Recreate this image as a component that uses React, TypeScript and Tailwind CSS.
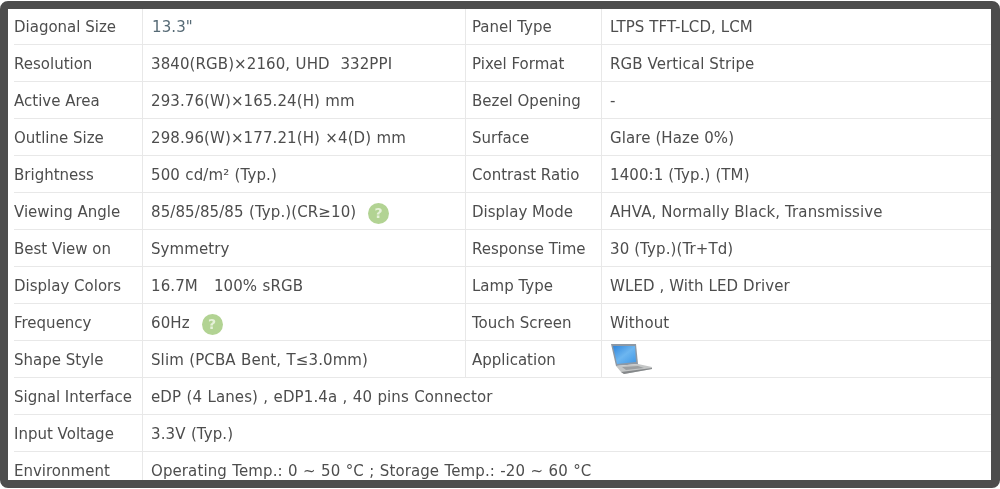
const rows = [
  ['Diagonal Size', '13.3"', 'Panel Type', 'LTPS TFT-LCD, LCM'],
  ['Resolution', '3840(RGB)×2160, UHD  332PPI', 'Pixel Format', 'RGB Vertical Stripe'],
  ['Active Area', '293.76(W)×165.24(H) mm', 'Bezel Opening', '-'],
  ['Outline Size', '298.96(W)×177.21(H) ×4(D) mm', 'Surface', 'Glare (Haze 0%)'],
  ['Brightness', '500 cd/m² (Typ.)', 'Contrast Ratio', '1400:1 (Typ.) (TM)'],
  ['Viewing Angle', '85/85/85/85 (Typ.)(CR≥10)', 'Display Mode', 'AHVA, Normally Black, Transmissive'],
  ['Best View on', 'Symmetry', 'Response Time', '30 (Typ.)(Tr+Td)'],
  ['Display Colors', '16.7M   100% sRGB', 'Lamp Type', 'WLED , With LED Driver'],
  ['Frequency', '60Hz', 'Touch Screen', 'Without'],
  ['Shape Style', 'Slim (PCBA Bent, T≤3.0mm)', 'Application', ''],
];

const wideRows = [
  ['Signal Interface', 'eDP (4 Lanes) , eDP1.4a , 40 pins Connector'],
  ['Input Voltage', '3.3V (Typ.)'],
  ['Environment', 'Operating Temp.: 0 ~ 50 °C ; Storage Temp.: -20 ~ 60 °C'],
];

function Help({ className }: { className: string }) {
  return (
    <span className={`mt-[2px] flex h-[21px] w-[21px] items-center justify-center rounded-full bg-[#b2d393] text-[14px] font-bold text-[#e6f1da] ${className}`}>?</span>
  );
}

function Laptop() {
  return (
    <svg width="44" height="34" viewBox="0 0 44 34" className="ml-[-1px] mt-[-3px]">
      <defs>
        <linearGradient id="screen" x1="0" y1="0" x2="1" y2="1">
          <stop offset="0" stopColor="#2f86dc" />
          <stop offset="0.5" stopColor="#6db6f0" />
          <stop offset="1" stopColor="#3f97e6" />
        </linearGradient>
      </defs>
      <path d="M2 2 L27 2 L29 22 L7 24 Z" fill="#8d98a4" />
      <path d="M4 4 L26 4 L27 20 L8 22 Z" fill="url(#screen)" />
      <path d="M7 24 L29 22 L43 25 L43 27 L15 32 L12 30 Z" fill="#c4c6c6" />
      <path d="M12 30 L43 26 L43 27 L15 32 Z" fill="#85888a" />
      <path d="M13 25 L29 24 L35 26 L17 28 Z" fill="#9c9fa1" />
    </svg>
  );
}

export default function App() {
  return (
    <div className="h-[489px] w-[1000px] overflow-hidden bg-white pt-[1px] font-['DejaVu_Sans',sans-serif] text-[15px] text-[#4d4d4d]">
      <div className="h-[487px] w-[1000px] overflow-hidden rounded-[8px] border-[8px] border-r-[9px] border-[#4d4d4d] bg-white pl-[6px]">
        <div className="blur-[0.35px]">
          {rows.map((r, i) => (
            <div key={r[0]} className={`flex border-b border-[#e8e8e8] ${i === 0 ? 'h-[36px]' : 'h-[37px]'}`}>
              <div className="flex w-[129px] items-center border-r border-[#e8e8e8] pt-[2px]">{r[0]}</div>
              <div className="flex w-[323px] items-center whitespace-pre border-r border-[#e8e8e8] pl-[8px] pt-[2px] tracking-[0.1px] [word-spacing:0.5px]">
                <span className={i === 0 ? 'ml-[1px] text-[#566a75]' : ''}>{r[1]}</span>
                {i === 5 && <Help className="ml-[12px]" />}
                {i === 8 && <Help className="ml-[12px]" />}
              </div>
              <div className="flex w-[136px] items-center border-r border-[#e8e8e8] pl-[6px] pt-[2px]">{r[2]}</div>
              <div className="flex flex-1 items-center whitespace-pre pl-[8px] pt-[2px] tracking-[0.1px]">
                {r[3]}
                {i === 9 && <Laptop />}
              </div>
            </div>
          ))}
          {wideRows.map((r) => (
            <div key={r[0]} className="flex h-[37px] border-b border-[#e8e8e8]">
              <div className="flex w-[129px] items-center border-r border-[#e8e8e8] pt-[2px]">{r[0]}</div>
              <div className="flex flex-1 items-center pl-[8px] pt-[2px] tracking-[0.1px] [word-spacing:0.5px]">{r[1]}</div>
            </div>
          ))}
        </div>
      </div>
    </div>
  );
}
